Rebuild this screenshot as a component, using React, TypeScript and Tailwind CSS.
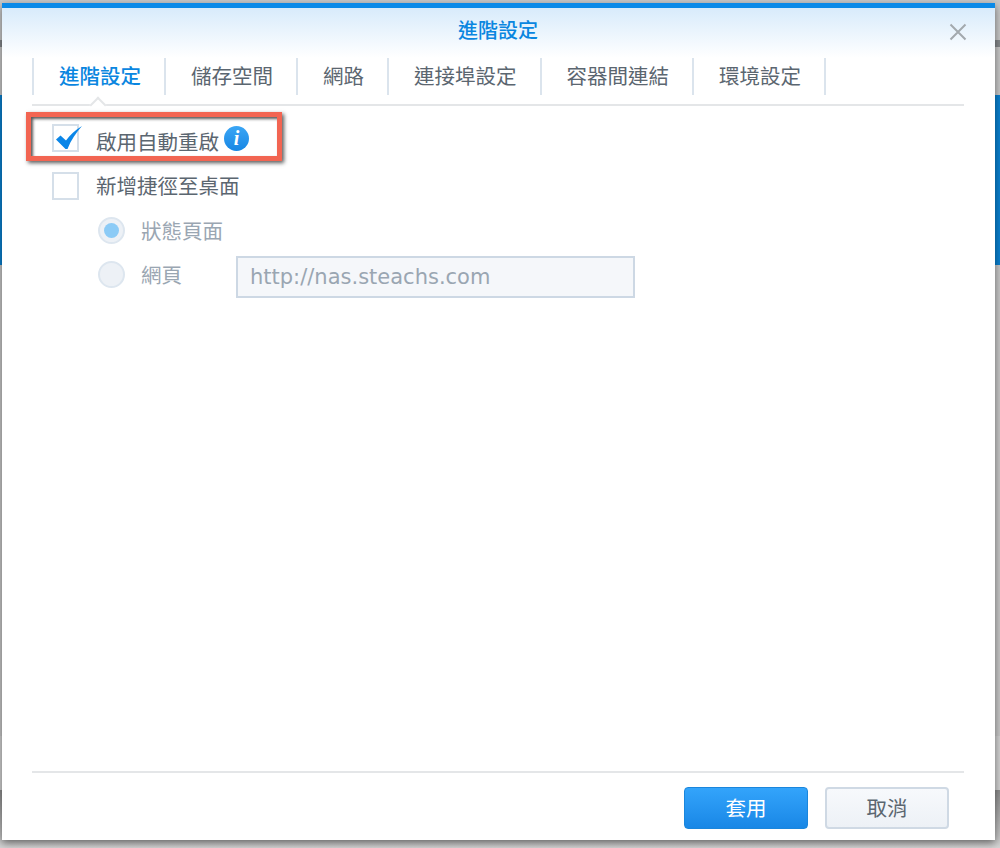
const cjk = "font-['Noto_Sans_CJK_TC','Noto_Sans_CJK_JP',sans-serif]";

const tabs = ["進階設定", "儲存空間", "網路", "連接埠設定", "容器間連結", "環境設定"];

function Checkbox({ checked }: { checked?: boolean }) {
  return (
    <span className="relative block w-[27px] h-[28px] shrink-0 border-2 border-[#d5dfe9] bg-white">
      {checked && (
        <svg className="absolute left-[1px] -top-[1px]" width="28" height="26" viewBox="0 0 28 26">
          <path d="M1 14.5 L5.5 10.5 L11 15.5 C15 10 20 5 27 1 C21 8 16 15 12.5 24 L10.5 24 Z" fill="#0a86e8" />
        </svg>
      )}
    </span>
  );
}

function Radio({ on }: { on?: boolean }) {
  return (
    <span className="flex items-center justify-center w-[27px] h-[27px] shrink-0 rounded-full border-2 border-[#dde6ef] bg-[#edf1f6]">
      {on && <span className="block w-[15px] h-[15px] rounded-full bg-[#8ccbf6]" />}
    </span>
  );
}

export default function App() {
  return (
    <div className={`relative w-[1000px] h-[848px] overflow-hidden bg-[#c9c9c9] ${cjk}`}>
      {/* Page behind the dialog, only its edges show */}
      <div className="flex flex-col h-full">
        <div className="h-[40px] shrink-0" />
        <div className="h-[7px] shrink-0 bg-[#85898c]" />
        <div className="h-[48px] shrink-0" />
        <div className="h-[170px] shrink-0 bg-[#0a82d2]" />
        <div className="h-[471px] shrink-0" />
        <div className="h-[54px] shrink-0 bg-[#d3d3d3]" />
        <div className="flex-1 bg-gradient-to-b from-[#8e8e8e] to-[#d5d5d5]" />
      </div>

      {/* Dialog */}
      <div className="absolute left-[2px] top-[3px] w-[993px] h-[837px] flex flex-col bg-white border-t-[5px] border-[#0a8ae8] shadow-[0_3px_8px_rgba(0,0,0,0.5)]">
        <div className="h-[50px] shrink-0 bg-gradient-to-b from-[#d8ebfb] to-white flex items-center justify-center relative">
          <h1 className="text-[20px] leading-none font-medium text-[#0a86e0] -mt-[6px] -ml-[1px]">進階設定</h1>
          <svg className="absolute right-[28px] top-[15px]" width="18" height="18" viewBox="0 0 18 18">
            <path d="M1.5 1.5 L16.5 16.5 M16.5 1.5 L1.5 16.5" stroke="#a3a9ae" strokeWidth="2" fill="none" />
          </svg>
        </div>

        <div className="ml-[30px] mr-[31px] h-[48px] shrink-0 border-b-2 border-[#e4e6e8] relative">
          <div className="flex h-[37px]">
            {tabs.map((t, i) => (
              <div
                key={t}
                className={`flex items-center pl-[25px] pr-[23px] pb-[2px] text-[20.5px] leading-none border-r-2 border-[#dbe4ed] ${
                  i === 0 ? "border-l-2 font-medium text-[#0a86e0]" : "text-[#5b6670]"
                }`}
              >
                {t}
              </div>
            ))}
          </div>
          {/* Notch under the active tab */}
          <span className="absolute left-[60px] -bottom-[7px] w-[12px] h-[12px] rotate-45 bg-white border-l-2 border-t-2 border-[#e4e6e8]" />
        </div>

        <div className="flex-1 flex flex-col pl-[50px] pt-[18px]">
          <div className="relative flex items-center h-[28px]">
            <Checkbox checked />
            <span className="ml-[17px] mt-[6px] text-[20.5px] leading-none text-[#5b6670]">啟用自動重啟</span>
            <span className="ml-[5px] flex items-center justify-center w-[25px] h-[25px] rounded-full bg-gradient-to-b from-[#3aa6f5] to-[#1586e4] text-white text-[20px] leading-none font-bold italic font-['Liberation_Serif',serif]">
              i
            </span>
            {/* Red annotation frame */}
            <span className="absolute -left-[26px] -top-[12px] w-[256px] h-[49px] border-[5px] border-[#f26552] shadow-[2px_2px_4px_rgba(0,0,0,0.65),inset_2px_2px_3px_rgba(0,0,0,0.65)]" />
          </div>

          <div className="flex items-center h-[28px] mt-[20px]">
            <Checkbox />
            <span className="ml-[17px] pb-[2px] text-[20.5px] leading-none text-[#5b6670]">新增捷徑至桌面</span>
          </div>

          <div className="flex items-center h-[27px] mt-[17px] ml-[46px]">
            <Radio on />
            <span className="ml-[16px] text-[20.5px] leading-none text-[#9aa6b2]">狀態頁面</span>
          </div>

          <div className="flex items-start mt-[17px] ml-[46px]">
            <Radio />
            <span className="ml-[16px] text-[20.5px] leading-[27px] text-[#9aa6b2]">網頁</span>
            <div className="ml-[54px] -mt-[5px] w-[399px] h-[42px] flex items-center px-[12px] border-2 border-[#cdd8e4] bg-[#f5f7fa] text-[21px] leading-none text-[#9aa6b2] font-['DejaVu_Sans',sans-serif]">
              http://nas.steachs.com
            </div>
          </div>
        </div>

        <div className="ml-[30px] mr-[31px] h-[69px] shrink-0 border-t-2 border-[#e4e6e8] flex justify-end items-start gap-[17px]">
          <button className="mt-[14px] w-[124px] h-[42px] rounded-[4px] border border-[#1a86dc] bg-gradient-to-b from-[#33a4fb] to-[#1887e6] text-white text-[20.5px] leading-none pb-[1px]">
            套用
          </button>
          <button className="mt-[14px] mr-[15px] w-[124px] h-[42px] rounded-[4px] border-2 border-[#cfd9e4] bg-gradient-to-b from-[#f7f9fc] to-[#edf1f6] text-[#5b6670] text-[20.5px] leading-none pb-[1px]">
            取消
          </button>
        </div>
      </div>
    </div>
  );
}
